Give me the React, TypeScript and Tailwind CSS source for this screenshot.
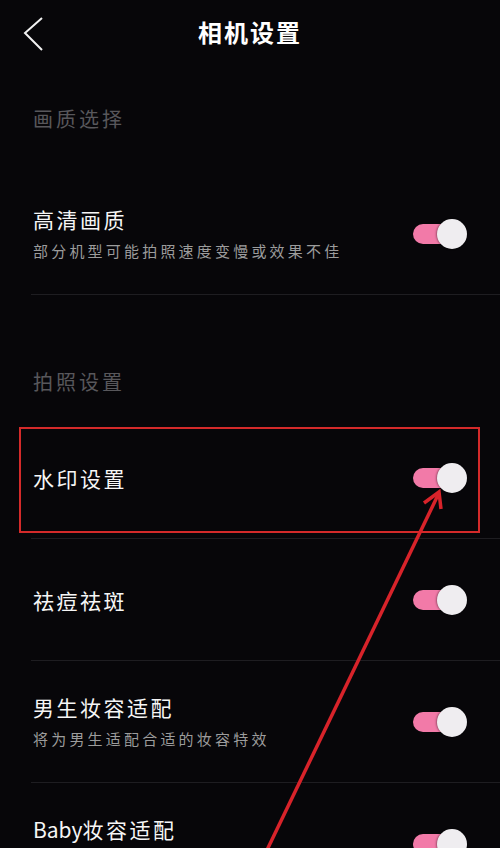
import React from "react";

const font = { fontFamily: '"Noto Sans CJK SC", "Noto Sans", sans-serif' };

function Toggle() {
  return (
    <div className="relative w-[54px] h-[30px] shrink-0">
      <div className="absolute left-0 top-[5px] w-[42px] h-[20px] rounded-full bg-[#f27aa8]" />
      <div className="absolute right-0 top-0 w-[30px] h-[30px] rounded-full bg-[#efedf0] shadow-[-1px_0_2px_rgba(0,0,0,0.35)]" />
    </div>
  );
}

function Row({ title, sub, spacer, last }: { title: React.ReactNode; sub?: string; spacer?: boolean; last?: boolean }) {
  return (
    <div className={`ml-[31px] h-[122px] flex items-center justify-between pr-[33px] ${last ? "" : "border-b border-[#1e1d21]"}`}>
      <div className="flex flex-col pl-[2px]">
        <div className="text-[21px] leading-[26px] tracking-[2.5px] text-[#f6f6f6]">{title}</div>
        {sub && (
          <div className="mt-[8px] text-[15px] leading-[22px] tracking-[3.2px] text-[#9c9c9c]">{sub}</div>
        )}
        {spacer && <div className="mt-[8px] h-[22px]" />}
      </div>
      <Toggle />
    </div>
  );
}

export default function App() {
  return (
    <div className="relative w-[500px] h-[848px] overflow-hidden bg-[#070609]" style={font}>
      {/* Header */}
      <div className="relative h-[64px] flex items-center justify-center">
        <svg className="absolute left-[22px] top-[16px]" width="24" height="36" viewBox="0 0 24 36">
          <polyline points="20,2 3,17 20,34" fill="none" stroke="#f2f2f2" strokeWidth="2" />
        </svg>
        <div className="text-[24px] font-bold tracking-[2px] text-white">相机设置</div>
      </div>

      {/* Section 1 */}
      <div className="h-[109px] flex items-end pb-[40px] pl-[33px]">
        <div className="text-[20px] leading-[28px] tracking-[3px] text-[#58575b]">画质选择</div>
      </div>
      <Row title="高清画质" sub="部分机型可能拍照速度变慢或效果不佳" />

      {/* Section 2 */}
      <div className="h-[122px] flex items-end pb-[21px] pl-[33px]">
        <div className="text-[20px] leading-[28px] tracking-[3px] text-[#58575b]">拍照设置</div>
      </div>
      <div className="relative">
        <Row title="水印设置" />
        <div className="absolute left-[19px] right-[20px] top-[10px] bottom-[6px] border-2 border-[#d42a2a]" />
      </div>
      <Row title="祛痘祛斑" />
      <Row title="男生妆容适配" sub="将为男生适配合适的妆容特效" />
      <Row
        title={
          <>
            <span className="tracking-normal">Baby</span>妆容适配
          </>
        }
        spacer
        last
      />

      {/* Annotation arrow */}
      <svg className="absolute left-0 top-0 pointer-events-none" width="500" height="848" viewBox="0 0 500 848">
        <line x1="267" y1="850" x2="438" y2="495" stroke="#d8232a" strokeWidth="3.5" />
        <polyline points="424,503 439,492 441,509" fill="none" stroke="#d8232a" strokeWidth="3.5" strokeLinejoin="miter" />
      </svg>
    </div>
  );
}
